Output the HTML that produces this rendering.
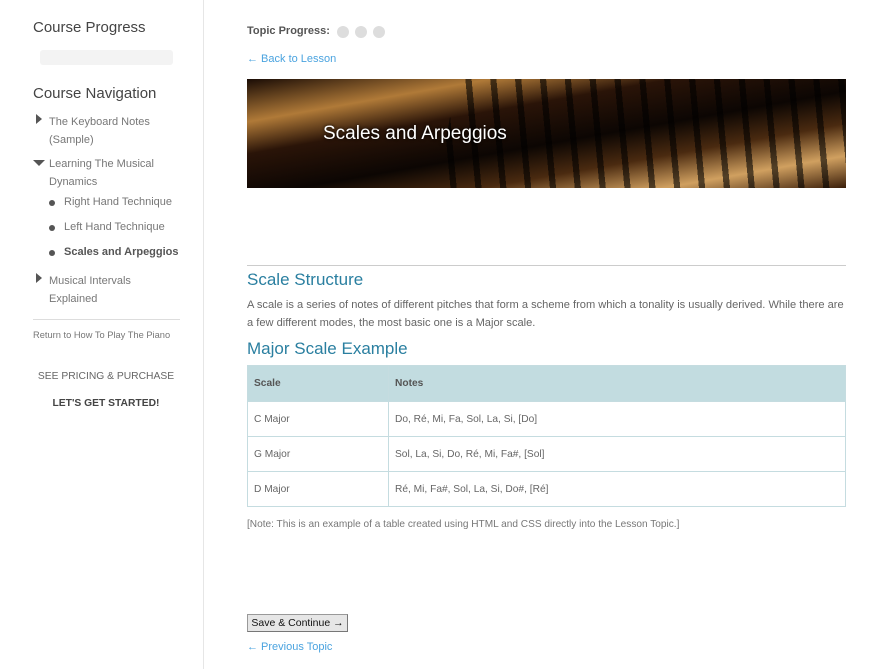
<!DOCTYPE html>
<html><head><meta charset="utf-8"><style>
body{margin:0;width:880px;height:669px;position:relative;font-family:"Liberation Sans",sans-serif;color:#666;background:#fff;overflow:hidden}
.a{position:absolute;white-space:nowrap}
.side{position:absolute;left:203px;top:0;width:1px;height:669px;background:#e6e6e6}
h3{margin:0;font-weight:normal;color:#444;font-size:15px}
.nav{font-size:11px;color:#777}
.tri{position:absolute;width:0;height:0}
.dot{position:absolute;width:6px;height:6px;border-radius:50%;background:#555}
.link{color:#4aa3df;font-size:11px}
table{position:absolute;left:247px;top:365px;width:599px;border-collapse:collapse;font-size:10.2px}
td,th{border:1px solid #c5dce0;text-align:left;padding:0 6px;height:34px;color:#666;font-weight:normal}
th{background:#c2dce0;font-weight:bold;color:#555;height:35px}
</style></head><body>
<div class="side"></div>
<div class="a" style="left:33px;top:19px"><h3>Course Progress</h3></div>
<div class="a" style="left:40px;top:50px;width:133px;height:15px;background:#f3f3f3;border-radius:3px"></div>
<div class="a" style="left:33px;top:85px"><h3>Course Navigation</h3></div>
<div class="tri" style="left:36px;top:114px;border-left:6px solid #555;border-top:5px solid transparent;border-bottom:5px solid transparent"></div>
<div class="a nav" style="left:49px;top:114px;line-height:17.5px">The Keyboard Notes<br>(Sample)</div>
<div class="tri" style="left:33px;top:160px;border-top:6px solid #555;border-left:6px solid transparent;border-right:6px solid transparent"></div>
<div class="a nav" style="left:49px;top:156px;line-height:17.5px">Learning The Musical<br>Dynamics</div>
<div class="dot" style="left:49px;top:200px"></div><div class="a nav" style="left:64px;top:196px">Right Hand Technique</div>
<div class="dot" style="left:49px;top:225px"></div><div class="a nav" style="left:64px;top:221px">Left Hand Technique</div>
<div class="dot" style="left:49px;top:250px"></div><div class="a nav" style="left:64px;top:246px;font-weight:bold;color:#555">Scales and Arpeggios</div>
<div class="tri" style="left:36px;top:273px;border-left:6px solid #555;border-top:5px solid transparent;border-bottom:5px solid transparent"></div>
<div class="a nav" style="left:49px;top:273px;line-height:17.5px">Musical Intervals<br>Explained</div>
<div class="a" style="left:33px;top:319px;width:147px;height:1px;background:#ddd"></div>
<div class="a" style="left:33px;top:330px;font-size:9.3px;color:#777">Return to How To Play The Piano</div>
<div class="a" style="left:0;width:212px;text-align:center;top:371px;font-size:10.3px;color:#666">SEE PRICING &amp; PURCHASE</div>
<div class="a" style="left:0;width:212px;text-align:center;top:398px;font-size:10.3px;color:#444;font-weight:bold">LET'S GET STARTED!</div>

<div class="a" style="left:247px;top:25px;font-size:11px;font-weight:bold;color:#555">Topic Progress:</div>
<div class="a" style="left:337px;top:26px;width:12px;height:12px;border-radius:50%;background:#ddd"></div>
<div class="a" style="left:355px;top:26px;width:12px;height:12px;border-radius:50%;background:#ddd"></div>
<div class="a" style="left:373px;top:26px;width:12px;height:12px;border-radius:50%;background:#ddd"></div>
<div class="a link" style="left:247px;top:53px">← Back to Lesson</div>
<div class="a" style="left:247px;top:79px;width:599px;height:109px;overflow:hidden;background:linear-gradient(170deg,#1a0c05 0%,#b07a38 20%,#2a1408 35%,#0c0603 55%,#4a2a10 70%,#d0a060 85%,#3a1e0a 100%)">
<div style="position:absolute;left:200px;top:-20px;width:420px;height:150px;background:repeating-linear-gradient(75deg,rgba(0,0,0,0) 0 18px,rgba(0,0,0,.6) 18px 24px);transform:skewX(-10deg)"></div>
<div style="position:absolute;left:76px;top:44px;font-size:19px;color:#fff;text-shadow:0 0 3px #000">Scales and Arpeggios</div></div>
<div class="a" style="left:247px;top:265px;width:599px;height:1px;background:#ccc"></div>
<div class="a" style="left:247px;top:270px;font-size:17px;color:#2a7fa0">Scale Structure</div>
<div class="a" style="left:247px;top:296px;font-size:11.1px;line-height:18px;color:#666">A scale is a series of notes of different pitches that form a scheme from which a tonality is usually derived. While there are<br>a few different modes, the most basic one is a Major scale.</div>
<div class="a" style="left:247px;top:339px;font-size:17px;color:#2a7fa0">Major Scale Example</div>
<table><tr><th style="width:128px">Scale</th><th>Notes</th></tr>
<tr><td>C Major</td><td>Do, Ré, Mi, Fa, Sol, La, Si, [Do]</td></tr>
<tr><td>G Major</td><td>Sol, La, Si, Do, Ré, Mi, Fa#, [Sol]</td></tr>
<tr><td>D Major</td><td>Ré, Mi, Fa#, Sol, La, Si, Do#, [Ré]</td></tr></table>
<div class="a" style="left:247px;top:519px;font-size:10.1px;color:#777">[Note: This is an example of a table created using HTML and CSS directly into the Lesson Topic.]</div>
<div class="a" style="left:247px;top:614px;width:99px;height:16px;background:#e6e6e6;border:1px solid #999;border-right-color:#777;border-bottom-color:#777;font-size:10.5px;color:#111;text-align:center;line-height:16px">Save &amp; Continue →</div>
<div class="a link" style="left:247px;top:641px">← Previous Topic</div>
</body></html>
